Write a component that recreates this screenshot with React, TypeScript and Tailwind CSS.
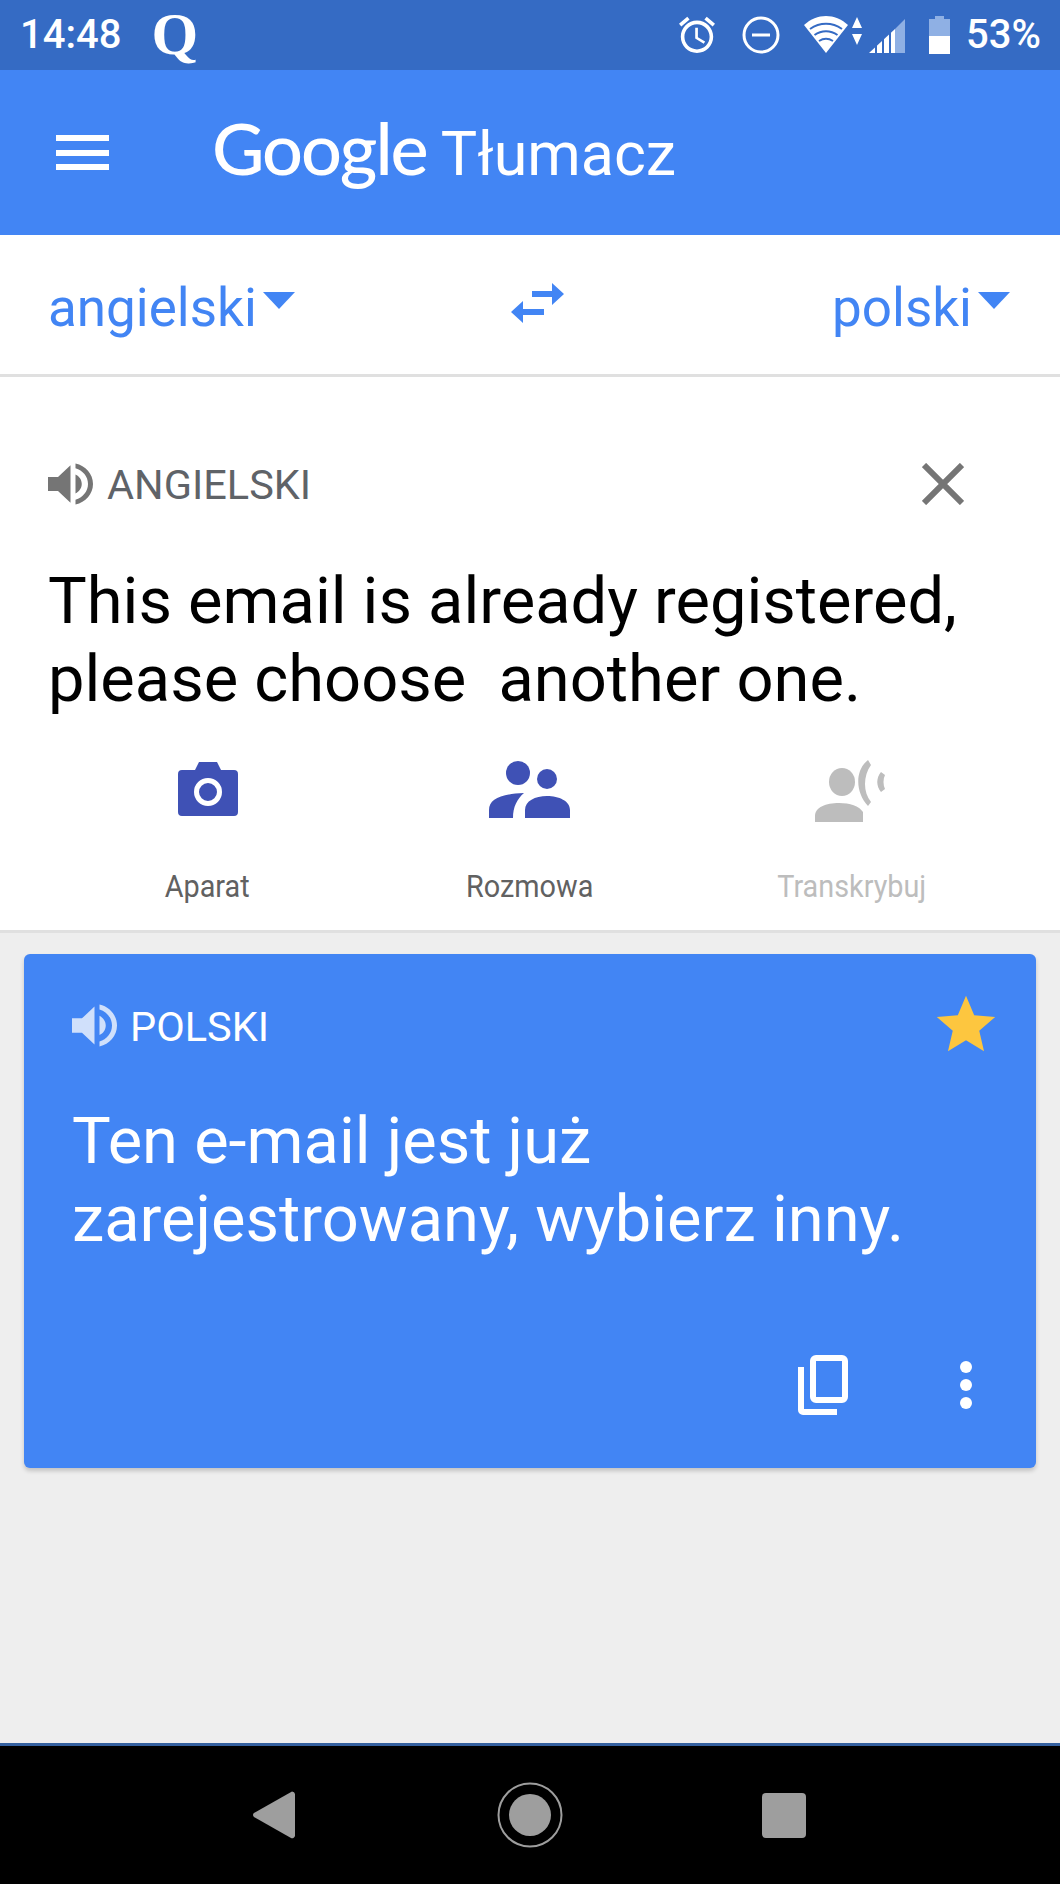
import React from 'react';

const roboto = { fontFamily: 'Roboto, sans-serif' };

const Speaker = ({ className }: { className: string }) => (
  <svg viewBox="3 3 18 18" className={className} fill="currentColor" preserveAspectRatio="none">
    <path d="M3 9v6h4l5 5V4L7 9H3zm13.5 3c0-1.77-1.02-3.29-2.5-4.03v8.05c1.48-.73 2.5-2.25 2.5-4.02zM14 3.23v2.06c2.89.86 5 3.54 5 6.71s-2.11 5.85-5 6.71v2.06c4.01-.91 7-4.49 7-8.77s-2.99-7.86-7-8.77z" />
  </svg>
);

const Caret = () => (
  <svg viewBox="0 0 32 17" className="w-8 h-[17px] mt-[-8px]" fill="#4285f4">
    <path d="M0 0h32L16 17z" />
  </svg>
);

const StatusBar = () => (
  <div className="h-[70px] bg-[#356bc4] flex items-center justify-between pl-5 pr-[19px] text-white">
    <div className="flex items-center">
      <span className="text-[40px] font-medium leading-none">14:48</span>
      <span className="ml-[30px] text-[60px] leading-none font-bold mt-[-2px]" style={{ fontFamily: '"Liberation Serif", serif' }}>Q</span>
    </div>
    <div className="flex items-center">
      <svg viewBox="2 1.8 20 20.4" className="w-[36px] h-[38px]" fill="currentColor">
        <path d="M22 5.72l-4.6-3.86-1.29 1.53 4.6 3.86L22 5.72zM7.88 3.39L6.6 1.86 2 5.71l1.29 1.53 4.59-3.85zM12.5 8H11v6l4.75 2.85.75-1.23-4-2.37V8zM12 4c-4.97 0-9 4.03-9 9s4.03 9 9 9 9-4.03 9-9-4.03-9-9-9zm0 16c-3.87 0-7-3.13-7-7s3.13-7 7-7 7 3.13 7 7-3.13 7-7 7z" />
      </svg>
      <svg viewBox="0 0 38 38" className="ml-[27px] w-[38px] h-[38px]" fill="none" stroke="currentColor" strokeWidth="3">
        <circle cx="19" cy="19" r="17" />
        <path d="M10 19h18" />
      </svg>
      <svg viewBox="0 0 44 38" className="ml-[24px] w-[44px] h-[38px]" fill="currentColor">
        <path d="M0 9C13-3 31-3 44 9L22 37z" />
        <path d="M6 13c10-7 22-7 32 0M10.500 19c7-5 16-5 23 0M15 25c4.500-2.800 9.500-2.800 14 0" fill="none" stroke="#356bc4" strokeWidth="2" />
      </svg>
      <svg viewBox="0 0 12 30" className="ml-[3px] w-3 h-[30px] mt-[-6px]" fill="currentColor">
        <path d="M6 0l5 11H1zM1 17h10L6 28z" />
      </svg>
      <svg viewBox="0 0 36 34" className="ml-[6px] w-9 h-[34px] mt-[2px]">
        <path d="M36 0v34H26V10z" fill="#8fb0e4" />
        <path d="M0 34L26 10v24z" fill="#fff" />
        <path d="M7 24v10M14 18v16M21 13v21" stroke="#356bc4" strokeWidth="2" fill="none" />
      </svg>
      <svg viewBox="0 0 21 38" className="ml-[24px] w-[21px] h-[38px]">
        <path d="M6 0h9v3h6v17H0V3h6z" fill="#8fb0e4" />
        <path d="M0 20h21v18H0z" fill="#fff" />
      </svg>
      <span className="ml-[16px] text-[40px] font-medium leading-none">53%</span>
    </div>
  </div>
);

const AppBar = () => (
  <div className="h-[165px] bg-[#4285f4] flex items-center text-white">
    <div className="ml-[56px] w-[53px] flex flex-col gap-[8.500px]">
      <div className="h-[6px] bg-white" />
      <div className="h-[6px] bg-white" />
      <div className="h-[6px] bg-white" />
    </div>
    <div className="ml-[103px] flex items-baseline mt-[-9px]" style={{ fontFamily: 'Lato, sans-serif' }}>
      <span className="text-[72px] font-medium tracking-[-2px] leading-none">Google</span>
      <span className="ml-[14px] text-[61px] leading-none" style={roboto}>Tłumacz</span>
    </div>
  </div>
);

const LanguageRow = () => (
  <div className="h-[142px] bg-white border-b-[3px] border-[#e0e0e0] flex items-center justify-between pl-[48px] pr-[50px] text-[#4285f4] text-[53px]">
    <div className="flex items-center gap-[6px]">
      <span className="leading-none mt-[8px]">angielski</span>
      <Caret />
    </div>
    <svg viewBox="0 0 53 40" className="w-[53px] h-[40px] ml-[-4px] mr-[48px] mt-[-4px]" fill="currentColor">
      <path d="M21 8h20V0l12 11-12 11v-8H21zM12 18v8h21v6H12v8L0 29z" />
    </svg>
    <div className="flex items-center gap-[6px]">
      <span className="leading-none mt-[8px]">polski</span>
      <Caret />
    </div>
  </div>
);

const SourcePanel = () => (
  <div className="bg-white border-b-[3px] border-[#e0e0e0] h-[556px]">
    <div className="pt-[85px] pl-[48px] pr-[96px] flex items-center justify-between">
      <div className="flex items-center text-[#5f6368]">
        <Speaker className="w-[45px] h-[42px] text-[#757575]" />
        <span className="ml-[14px] mt-[2px] text-[41.500px] leading-none">ANGIELSKI</span>
      </div>
      <svg viewBox="0 0 42 42" className="w-[42px] h-[42px]" stroke="#757575" strokeWidth="6" fill="none">
        <path d="M2 2l38 38M40 2L2 40" />
      </svg>
    </div>
    <div className="mt-[56px] px-[48px] text-[65px] leading-[78px] text-black whitespace-pre">
      {'This email is already registered,\nplease choose  another one.'}
    </div>
    <div className="mt-[42px] mx-[48px] grid grid-cols-3">
      <div className="flex flex-col items-center text-[#616161]">
        <svg viewBox="0 0 60 54" className="w-[60px] h-[54px] mt-[2px] mb-[4px] ml-[-2px]">
          <path d="M4 8h13l4-8h18l4 8h13a4 4 0 0 1 4 4v38a4 4 0 0 1-4 4H4a4 4 0 0 1-4-4V12a4 4 0 0 1 4-4z" fill="#3f51b5" />
          <circle cx="30" cy="30" r="11.500" fill="#3f51b5" stroke="#fff" strokeWidth="5" />
        </svg>
        <span className="mt-[50px] ml-[-2px] text-[32px] leading-none scale-x-90">Aparat</span>
      </div>
      <div className="flex flex-col items-center text-[#616161]">
        <svg viewBox="0 0 81 58" className="w-[81px] h-[58px]" fill="#3f51b5">
          <circle cx="29" cy="13" r="12" />
          <circle cx="58" cy="19" r="10" />
          <path d="M0 58V50c0-11 12-16 35-17-7 6-11 14-11 25zM36 58v-8c0-9 10-14 22-14s23 5 23 14v8z" />
        </svg>
        <span className="mt-[52px] text-[32px] leading-none scale-x-90">Rozmowa</span>
      </div>
      <div className="flex flex-col items-center text-[#bdbdbd]">
        <svg viewBox="0 0 73 62" className="w-[73px] h-[62px]" fill="#bdbdbd">
          <ellipse cx="27" cy="22" rx="13" ry="14" />
          <path d="M0 62V56c0-9 11-13 24-13 11 0 20 3 24 9v10z" />
          <path d="M53 0C40 10 40 32 53 46l3-4c-8-10-8-26 0-37z" />
          <path d="M66 12c-5 6-5 14 0 20l4-3c-2-4-2-10 0-14z" />
        </svg>
        <span className="mt-[48px] text-[32px] leading-none scale-x-90">Transkrybuj</span>
      </div>
    </div>
  </div>
);

const ResultCard = () => (
  <div className="mt-[21px] mx-6 h-[514px] rounded-md bg-[#4285f4] text-white shadow-[0_3px_4px_rgba(0,0,0,0.18)] flex flex-col pl-[48px] pr-[40px]">
    <div className="mt-[36px] flex items-center justify-between">
      <div className="flex items-center">
        <Speaker className="w-[45px] h-[43px] text-[#d0e0fb]" />
        <span className="ml-[13px] mt-[3px] text-[41.500px] leading-none">POLSKI</span>
      </div>
      <svg viewBox="0 0 24 24" className="w-[70px] h-[70px] mr-[-5px]" fill="#fdc63f">
        <path d="M12 17.270L18.180 21l-1.640-7.030L22 9.240l-7.190-.610L12 2 9.190 8.630 2 9.240l5.460 4.730L5.820 21z" />
      </svg>
    </div>
    <div className="mt-[42px] text-[65px] leading-[78px]">
      Ten e-mail jest już
      <br />
      zarejestrowany, wybierz inny.
    </div>
    <div className="mt-auto mb-[53px] flex items-center justify-end gap-[112px] pr-[24px]">
      <svg viewBox="0 0 50 60" className="w-[50px] h-[60px]" fill="none" stroke="#fff" strokeWidth="6">
        <rect x="15" y="3" width="32" height="42" rx="3" />
        <path d="M3 12v43a2 2 0 0 0 2 2h34" />
      </svg>
      <div className="flex flex-col gap-[6px]">
        <div className="w-3 h-3 rounded-full bg-white" />
        <div className="w-3 h-3 rounded-full bg-white" />
        <div className="w-3 h-3 rounded-full bg-white" />
      </div>
    </div>
  </div>
);

const NavBar = () => (
  <div className="h-[141px] bg-black border-t-[3px] border-[#34609f] flex items-center">
    <svg viewBox="0 0 42 48" className="ml-[253px] w-[42px] h-[48px]" fill="#9e9e9e">
      <path d="M39 0.500a3 3 0 0 1 3 2.500v42a3 3 0 0 1-4 2L1 26a2.500 2.500 0 0 1 0-4z" />
    </svg>
    <svg viewBox="0 0 66 66" className="ml-[202px] w-[66px] h-[66px]">
      <circle cx="33" cy="33" r="31.500" fill="none" stroke="#9e9e9e" strokeWidth="2" />
      <circle cx="33" cy="33" r="21" fill="#9e9e9e" />
    </svg>
    <div className="ml-[199px] w-[44px] h-[45px] rounded-[4px] bg-[#9e9e9e]" />
  </div>
);

export default function App() {
  return (
    <div className="w-[1060px] h-[1884px] flex flex-col bg-[#eeeeee] overflow-hidden" style={roboto}>
      <StatusBar />
      <AppBar />
      <LanguageRow />
      <SourcePanel />
      <ResultCard />
      <div className="flex-1" />
      <NavBar />
    </div>
  );
}
